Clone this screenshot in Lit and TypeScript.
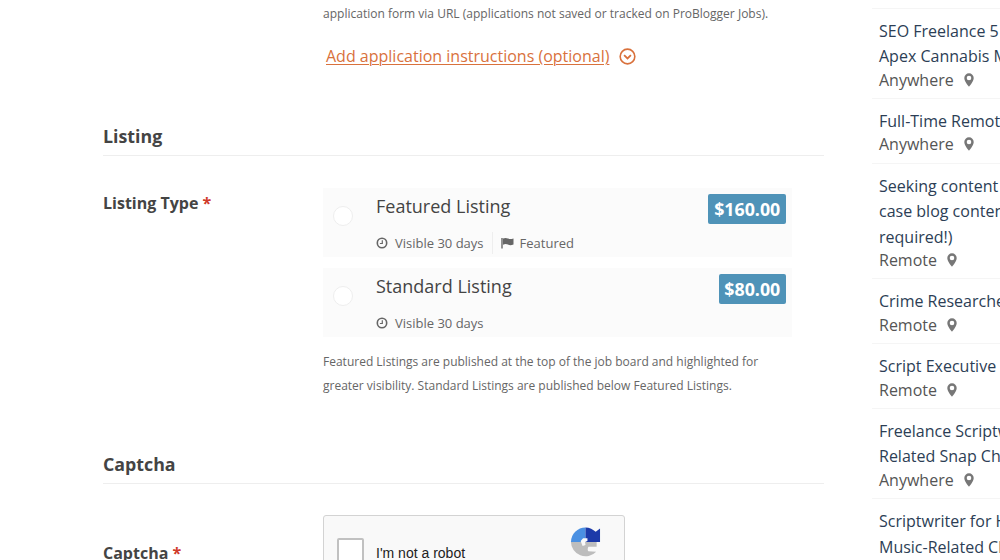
import { LitElement, html, css, svg } from "lit";
import { customElement } from "lit/decorators.js";

const clock = html`<svg class="mi" viewBox="0 0 12 12" width="12" height="12"><circle cx="6" cy="6" r="4.700" fill="none" stroke="#666" stroke-width="1.600"/><path d="M6.300 3.300V6.500H3.900" fill="none" stroke="#666" stroke-width="1.200"/></svg>`;
const flag = html`<svg class="mi fl" viewBox="0 0 13 12" width="13" height="12"><path d="M1 1V11.500" stroke="#666" stroke-width="1.400"/><path d="M2 1.600C4 .6 5.500 .9 7 1.600S10 2.300 12.500 1.400V7.600C10 8.500 8.500 8.300 7 7.600S4 6.800 2 7.700Z" fill="#666"/></svg>`;
const pin = html`<svg class="pin" viewBox="0 0 10 14" width="10" height="14"><path fill-rule="evenodd" d="M5 .3A4.700 4.700 0 0 0 .3 5C.3 8 3.800 12.500 5 13.700 6.200 12.500 9.700 8 9.700 5A4.700 4.700 0 0 0 5 .3ZM5 2.700A2.300 2.300 0 1 1 5 7.300 2.300 2.300 0 0 1 5 2.700Z" fill="#777"/></svg>`;

const jobs = [
  { t: ["SEO Freelance 5 Articles", "Apex Cannabis Marketing"], l: "Anywhere" },
  { t: ["Full-Time Remote Writer"], l: "Anywhere" },
  { t: ["Seeking content writer for", "case blog content (experience", "required!)"], l: "Remote" },
  { t: ["Crime Researcher and Writer"], l: "Remote" },
  { t: ["Script Executive Needed"], l: "Remote" },
  { t: ["Freelance Scriptwriter for", "Related Snap Channel"], l: "Anywhere" },
  { t: ["Scriptwriter for Hire", "Music-Related Channel"], l: "" },
];

@customElement("app-root")
export class AppRoot extends LitElement {
  static styles = css`
    :host { display: block; width: 1000px; height: 560px; overflow: hidden; background: #fff; font-family: "Open Sans", sans-serif; color: #444; }
    .page { display: flex; align-items: flex-start; height: 560px; }
    .main { width: 721px; margin-left: 103px; flex: none; }
    .intro { margin-left: 220px; padding-top: 5px; font-size: 12.020px; line-height: 18px; color: #666; white-space: nowrap; }
    .addlink { margin: 20px 0 0 223px; display: flex; align-items: center; gap: 10px; height: 26px; font-size: 16px; color: #d9713c; }
    .addlink span { text-decoration: underline; text-underline-offset: 2px; text-decoration-thickness: 1px; }
    h2 { margin: 0; font-size: 17.800px; font-weight: 700; line-height: 25px; color: #444; border-bottom: 1px solid #eee; padding-bottom: 6px; }
    .listing { margin-top: 55px; }
    .row { display: flex; }
    .listrow { margin-top: 32px; }
    .label { width: 220px; flex: none; font-size: 16px; font-weight: 700; line-height: 22px; color: #444; white-space: nowrap; padding-top: 4px; }
    .req { color: #d0392b; }
    .fields { width: 469px; }
    .opt { position: relative; background: #fbfbfb; height: 69px; display: flex; margin-bottom: 11px; }
    .radio { width: 20px; height: 20px; border-radius: 50%; background: #fff; border: 1px solid #eee; box-sizing: border-box; margin: 18px 0 0 10px; flex: none; }
    .body { margin-left: 23px; flex: 1; }
    .name { font-size: 18px; line-height: 25px; padding-top: 6px; color: #444; }
    .meta { display: flex; align-items: center; font-size: 13px; line-height: 20px; margin-top: 13px; color: #666; height: 22px; }
    .mi { margin-right: 7px; flex: none; }
    .mi.fl { margin-right: 6px; }
    .sep { width: 1px; height: 22px; background: #eee; margin: 0 8px; }
    .price { position: absolute; top: 6px; right: 6px; background: #4f93b8; color: #fff; font-size: 17.800px; font-weight: 700; line-height: 30px; padding: 0 5.750px; border-radius: 2px; }
    .note { margin: 13px 0 0; font-size: 12px; line-height: 24px; color: #666; white-space: nowrap; }
    .captcha { margin-top: 54px; }
    .caprow { margin-top: 31px; }
    .label.c { padding-top: 27px; }
    .rc { width: 302px; height: 74px; box-sizing: border-box; background: #f9f9f9; border: 1px solid #d3d3d3; border-radius: 3px; position: relative; display: flex; align-items: flex-start; }
    .box { width: 27px; height: 27px; box-sizing: border-box; background: #fff; border: 2px solid #c1c1c1; border-radius: 2px; margin: 22px 0 0 13px; }
    .rct { font-family: "Liberation Sans", Arial, sans-serif; font-size: 14px; color: #222; margin: 28px 0 0 12px; white-space: nowrap; line-height: 18px; }
    .logo { position: absolute; left: 246px; top: 10px; }
    .side { margin-left: 48px; width: 128px; flex: none; overflow: hidden; padding-top: 7.600px; }
    .job { border-top: 1px solid #f5f5f5; padding: 10px 0 8.100px 7px; white-space: nowrap; }
    .t { font-size: 16px; line-height: 25.600px; color: #2c3e55; }
    .loc { font-size: 16px; line-height: 20px; color: #555; display: flex; align-items: center; gap: 10px; }
  `;

  render() {
    return html`<div class="page">
      <div class="main">
        <div class="intro">application form via URL (applications not saved or tracked on ProBlogger Jobs).</div>
        <div class="addlink"><span>Add application instructions (optional)</span>
          <svg viewBox="0 0 16 16" width="17" height="17"><circle cx="8" cy="8" r="6.900" fill="none" stroke="#d9713c" stroke-width="1.500"/><path d="M4.800 6.800 8 9.900 11.200 6.800" fill="none" stroke="#d9713c" stroke-width="1.700"/></svg>
        </div>
        <div class="listing">
          <h2>Listing</h2>
          <div class="row listrow">
            <div class="label">Listing Type <span class="req">*</span></div>
            <div class="fields">
              <div class="opt"><div class="radio"></div><div class="body">
                <div class="name">Featured Listing</div>
                <div class="meta">${clock}Visible 30 days<span class="sep"></span>${flag}Featured</div>
              </div><div class="price">$160.00</div></div>
              <div class="opt"><div class="radio"></div><div class="body">
                <div class="name">Standard Listing</div>
                <div class="meta">${clock}Visible 30 days</div>
              </div><div class="price">$80.00</div></div>
              <p class="note">Featured Listings are published at the top of the job board and highlighted for<br>greater visibility. Standard Listings are published below Featured Listings.</p>
            </div>
          </div>
        </div>
        <div class="captcha">
          <h2>Captcha</h2>
          <div class="row caprow">
            <div class="label c">Captcha <span class="req">*</span></div>
            <div class="rc"><div class="box"></div><div class="rct">I'm not a robot</div>
              <svg class="logo" viewBox="0 0 32 32" width="31" height="32">
                ${svg`<path d="M16 1A15 15 0 0 0 1 16H16V1Z" fill="#4a90e2"/>
                <path d="M16 1C20 1 24 3 26.500 5.500L31 2V16H16Z" fill="#1c3aa9"/>
                <path d="M1 16H27.500V21H19C18 23 18 24.500 19 25.500L27 26A15 15 0 0 1 1 16Z" fill="#bdbdbd"/>
                <path d="M11 15 13.500 12H18V15L15.500 16 16 19 13 20Z" fill="#f9f9f9"/>`}
              </svg>
            </div>
          </div>
        </div>
      </div>
      <div class="side">
        ${jobs.map((j) => html`<div class="job">
          ${j.t.map((x) => html`<div class="t">${x}</div>`)}
          ${j.l ? html`<div class="loc">${j.l}${pin}</div>` : ""}
        </div>`)}
      </div>
    </div>`;
  }
}
